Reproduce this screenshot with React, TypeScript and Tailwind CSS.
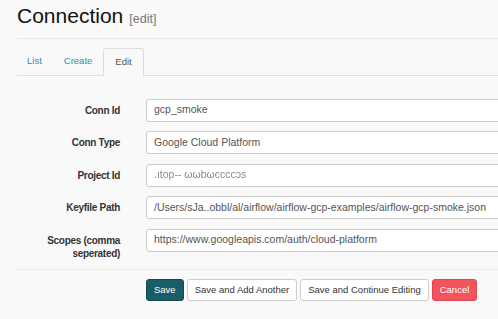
const fields = [
  { label: "Conn Id", value: "gcp_smoke" },
  { label: "Conn Type", value: "Google Cloud Platform" },
  { label: "Project Id", value: ".ıtop-- ωωbωccccɔs", smudged: true },
  {
    label: "Keyfile Path",
    value: "/Users/sJa..obbl/al/airflow/airflow-gcp-examples/airflow-gcp-smoke.json",
  },
  { label: "Scopes (comma seperated)", value: "https://www.googleapis.com/auth/cloud-platform" },
];

const btn =
  "h-[22px] rounded-[3px] border px-[7px] text-[9.5px] leading-none whitespace-nowrap";

const App = () => {
  return (
    <div
      className="w-full h-[319px] overflow-hidden bg-[#f9f9f9]"
      style={{ fontFamily: '"Liberation Sans", Arial, sans-serif' }}
    >
      <div className="w-[600px] pl-[17px] pt-[4px]">
        {/* Header */}
        <div className="flex items-baseline gap-[6px] pb-[9px] border-b border-[#e9e9e9]">
          <h1 className="text-[21px] leading-[24px] text-[#111]">Connection</h1>
          <span className="text-[12.5px] text-[#777]">[edit]</span>
        </div>

        {/* Tabs */}
        <div className="mt-[9px] flex items-end gap-[1px] border-b border-[#dddddd] h-[28px]">
          <a className="px-[10px] h-[27px] flex items-center text-[9.5px] text-[#2a8fa5]">List</a>
          <a className="ml-[1px] px-[10px] h-[27px] flex items-center text-[9.5px] text-[#2a8fa5]">
            Create
          </a>
          <a className="-mb-[1px] px-[11px] h-[28px] flex items-center text-[9.5px] text-[#555] bg-[#f9f9f9] border border-b-0 border-[#dddddd] rounded-t-[3px]">
            Edit
          </a>
        </div>

        {/* Form */}
        <div className="mt-[23px] flex flex-col gap-[9.5px]">
          {fields.map((f) => (
            <div key={f.label} className="flex items-start gap-[26px]">
              <label className="w-[103px] pt-[5px] text-right text-[10px] leading-[13px] font-bold text-[#333] tracking-[-0.3px]">
                {f.label}
              </label>
              <div className="flex-1 h-[23px] flex items-center rounded-[3px] border border-[#cccccc] bg-white px-[7px] text-[10.5px] text-[#555]">
                <span className={f.smudged ? "blur-[0.5px] text-[#888]" : ""}>{f.value}</span>
              </div>
            </div>
          ))}
        </div>

        <div className="mt-[9px] border-t border-[#e9e9e9]" />

        {/* Actions */}
        <div className="mt-[9px] ml-[129px] flex gap-[3px]">
          <button className={`${btn} bg-[#1b5d66] border-[#134a51] text-white`}>Save</button>
          <button className={`${btn} bg-white border-[#cccccc] text-[#333]`}>
            Save and Add Another
          </button>
          <button className={`${btn} bg-white border-[#cccccc] text-[#333]`}>
            Save and Continue Editing
          </button>
          <button className={`${btn} bg-[#f0545d] border-[#e4434d] text-white`}>Cancel</button>
        </div>
      </div>
    </div>
  );
};

export default App;
